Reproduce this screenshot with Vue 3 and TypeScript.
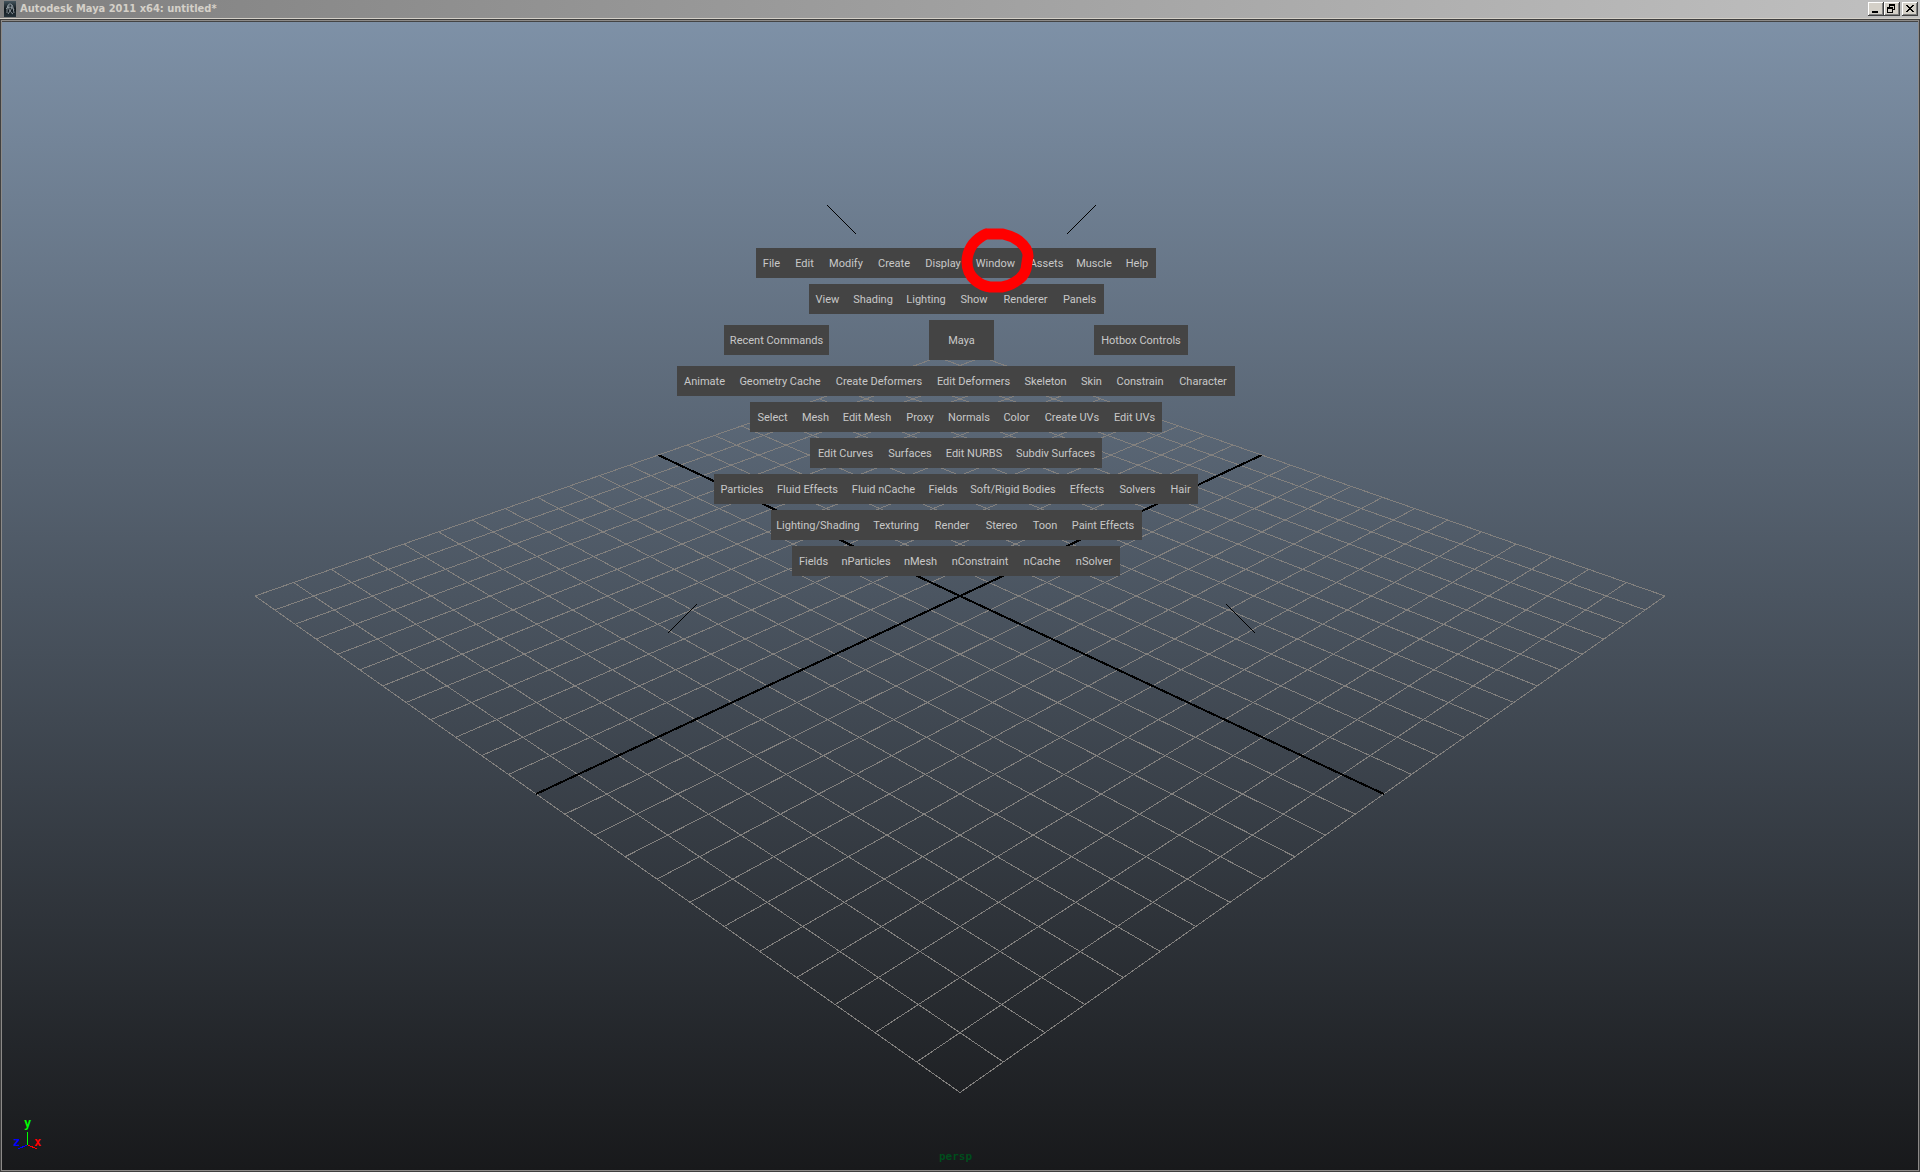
<script setup lang="ts">
interface MenuItem {
  label: string
  width: number
}

const row = (...items: [string, number][]): MenuItem[] =>
  items.map(([label, width]) => ({ label, width }))

const upperRows: MenuItem[][] = [
  row(['File', 31], ['Edit', 35], ['Modify', 48], ['Create', 48], ['Display', 50], ['Window', 55], ['Assets', 47], ['Muscle', 48], ['Help', 38]),
  row(['View', 38], ['Shading', 53], ['Lighting', 53], ['Show', 43], ['Renderer', 60], ['Panels', 48]),
]

const lowerRows: MenuItem[][] = [
  row(['Animate', 55], ['Geometry Cache', 96], ['Create Deformers', 102], ['Edit Deformers', 87], ['Skeleton', 57], ['Skin', 35], ['Constrain', 62], ['Character', 64]),
  row(['Select', 45], ['Mesh', 41], ['Edit Mesh', 62], ['Proxy', 44], ['Normals', 54], ['Color', 41], ['Create UVs', 70], ['Edit UVs', 55]),
  row(['Edit Curves', 71], ['Surfaces', 58], ['Edit NURBS', 70], ['Subdiv Surfaces', 93]),
  row(['Particles', 56], ['Fluid Effects', 75], ['Fluid nCache', 77], ['Fields', 42], ['Soft/Rigid Bodies', 98], ['Effects', 50], ['Solvers', 51], ['Hair', 35]),
  row(['Lighting/Shading', 95], ['Texturing', 61], ['Render', 51], ['Stereo', 48], ['Toon', 39], ['Paint Effects', 77]),
  row(['Fields', 43], ['nParticles', 62], ['nMesh', 47], ['nConstraint', 72], ['nCache', 52], ['nSolver', 52]),
]

// Perspective projection of a ground-plane point, seen along the grid's diagonal
const HALF = 12
function project(u: number, v: number): [number, number] {
  const depth = 1 - 0.014029 * (u + v)
  return [960 + (29.375 * (u - v)) / depth, 596 + (13.722 * (u + v)) / depth]
}

function segment(u1: number, v1: number, u2: number, v2: number): string {
  const [x1, y1] = project(u1, v1)
  const [x2, y2] = project(u2, v2)
  return `M${x1.toFixed(1)} ${y1.toFixed(1)}L${x2.toFixed(1)} ${y2.toFixed(1)}`
}

let gridPath = ''
for (let i = -HALF; i <= HALF; i++) {
  if (i === 0) continue
  gridPath += segment(i, -HALF, i, HALF) + segment(-HALF, i, HALF, i)
}
const axisPath = segment(0, -HALF, 0, HALF) + segment(-HALF, 0, HALF, 0)
</script>

<template>
  <div class="window">
    <header class="titlebar">
      <svg class="app-icon" viewBox="0 0 16 16" aria-hidden="true">
        <defs>
          <linearGradient id="icon-bg" x1="0" y1="0" x2="0" y2="1">
            <stop offset="0" stop-color="#46565f" />
            <stop offset="0.5" stop-color="#10181d" />
            <stop offset="1" stop-color="#25323a" />
          </linearGradient>
        </defs>
        <rect x="0" y="0" width="12" height="16" fill="url(#icon-bg)" />
        <path d="M3 12C3 8 3 3 6 3S9 7 10 12M2 8C4 5 9 6 10 9M5 4C4 8 6 11 9 13M8 4C8 8 6 10 4 13" fill="none" stroke="#98a3a9" stroke-width="0.9" />
      </svg>
      <h1 class="title">Autodesk Maya 2011 x64: untitled*</h1>
      <div class="controls">
        <button class="control" type="button" aria-label="Minimize">
          <svg viewBox="0 0 16 14" shape-rendering="crispEdges"><path d="M4 9h6v2H4z" /></svg>
        </button>
        <button class="control" type="button" aria-label="Restore">
          <svg viewBox="0 0 16 14" shape-rendering="crispEdges"><path d="M5 2h6v6H9V7h1V4H6v1H5zM3 5h6v6H3zM4 7v3h4V7z" fill-rule="evenodd" /></svg>
        </button>
        <button class="control close" type="button" aria-label="Close">
          <svg viewBox="0 0 16 14" shape-rendering="crispEdges"><path d="M4 3h2v1h1v1h2V4h1V3h2v1h-1v1h-1v1H9v1h1v1h1v1h1v1h-2V9H9V8H7v1H6v1H4V9h1V8h1V7h1V6H6V5H5V4H4z" /></svg>
        </button>
      </div>
    </header>

    <main class="viewport">
      <svg class="scene" viewBox="2 22 1916 1148" aria-hidden="true">
        <path class="grid" :d="gridPath" />
        <path class="axes" :d="axisPath" />
        <path class="ticks" d="M827 205L856 234M1096 205L1067 234M697 604L668 633M1226 604L1255 633" />
        <path d="M27.5 1132V1145" stroke="#00ff00" class="gizmo" />
        <path d="M27 1145L18 1149" stroke="#0000ff" class="gizmo" />
        <path d="M28 1145L37 1149" stroke="#ff0000" class="gizmo" />
        <text x="24" y="1127" fill="#00ff00">y</text>
        <text x="13" y="1146" fill="#0000ff">z</text>
        <text x="34" y="1146" fill="#ff0000">x</text>
        <text class="camera" x="939" y="1160" fill="#004d1c">persp</text>
      </svg>

      <nav class="hotbox" aria-label="Hotbox">
        <div v-for="(items, r) in upperRows" :key="'u' + r" class="menu-row">
          <button v-for="item in items" :key="item.label" type="button" class="item" :style="{ width: item.width + 'px' }">{{ item.label }}</button>
        </div>
        <div class="middle-row">
          <button type="button" class="item boxed" :style="{ width: '105px' }">Recent Commands</button>
          <button type="button" class="item boxed tall" :style="{ width: '65px' }">Maya</button>
          <button type="button" class="item boxed" :style="{ width: '94px' }">Hotbox Controls</button>
        </div>
        <div v-for="(items, r) in lowerRows" :key="'l' + r" class="menu-row">
          <button v-for="item in items" :key="item.label" type="button" class="item" :style="{ width: item.width + 'px' }">{{ item.label }}</button>
        </div>
      </nav>

      <svg class="scene marker" viewBox="2 22 1916 1148" aria-hidden="true">
        <path d="M986 234H1003Q1012 236 1019 241Q1028 248 1028 256L1026 269Q1024 277 1015 282Q1009 286 1002 287H990Q982 286 975 280Q967 273 967 262Q967 252 973 244Q979 237 986 234" />
      </svg>
    </main>
  </div>
</template>

<style>
body {
  margin: 0;
}
</style>

<style scoped>
.window {
  display: flex;
  flex-direction: column;
  min-height: 100vh;
  box-sizing: border-box;
  background: #404040;
  font-family: Roboto, "Noto Sans", sans-serif;
  font-size: 11px;
}

.titlebar {
  display: flex;
  align-items: center;
  height: 18px;
  padding: 0 2px 0 4px;
  background: linear-gradient(90deg, #808080, #c0c0c0);
  border-bottom: 1px solid #d4d0c8;
}

.app-icon {
  width: 16px;
  height: 16px;
}

.title {
  flex: 1;
  margin: 0;
  font-family: "DejaVu Sans Condensed", "Noto Sans", sans-serif;
  font-size: 11px;
  line-height: 18px;
  font-weight: 700;
  color: #d4d0c8;
  white-space: nowrap;
}

.controls {
  display: flex;
}

.control {
  width: 16px;
  height: 14px;
  padding: 0;
  border: 0;
  background: #d4d0c8;
  box-shadow: inset -1px -1px #404040, inset 1px 1px #ffffff, inset -2px -2px #808080;
}

.control svg {
  display: block;
  width: 16px;
  height: 14px;
}

.close {
  margin-left: 2px;
}

.viewport {
  position: relative;
  flex: 1;
  margin: 1px;
  border: 1px solid #8c8a88;
  box-shadow: inset 0 1px #444444;
  background: linear-gradient(#7e91a7, #18191b);
}

.scene {
  position: absolute;
  top: 1px;
  left: 0;
  width: 100%;
  height: calc(100% - 1px);
}

.grid {
  fill: none;
  stroke: #82807e;
  stroke-width: 1;
  shape-rendering: crispEdges;
}

.axes {
  fill: none;
  stroke: #000000;
  stroke-width: 2;
  shape-rendering: crispEdges;
}

.ticks {
  fill: none;
  stroke: #000000;
  stroke-width: 1;
}

.gizmo {
  fill: none;
  shape-rendering: crispEdges;
}

.scene text {
  font-family: "DejaVu Sans Mono", monospace;
  font-size: 12px;
  font-weight: 700;
}

.scene .camera {
  font-size: 11px;
}

.hotbox {
  position: relative;
  display: flex;
  flex-direction: column;
  align-items: center;
  gap: 6px;
  padding: 227px 8px 0 0;
}

.menu-row {
  display: flex;
  background: #444444;
}

.middle-row {
  display: flex;
  align-items: center;
  gap: 100px;
}

.item {
  height: 30px;
  padding: 2px 0 0;
  border: 0;
  background: transparent;
  color: #c8c8c8;
  font-family: inherit;
  font-size: 11px;
  line-height: 16px;
  text-align: center;
  white-space: nowrap;
}

.boxed {
  background: #444444;
}

.tall {
  height: 40px;
}

.marker {
  pointer-events: none;
}

.marker path {
  fill: none;
  stroke: #ff0000;
  stroke-width: 11;
  stroke-linecap: round;
  stroke-linejoin: round;
}
</style>
